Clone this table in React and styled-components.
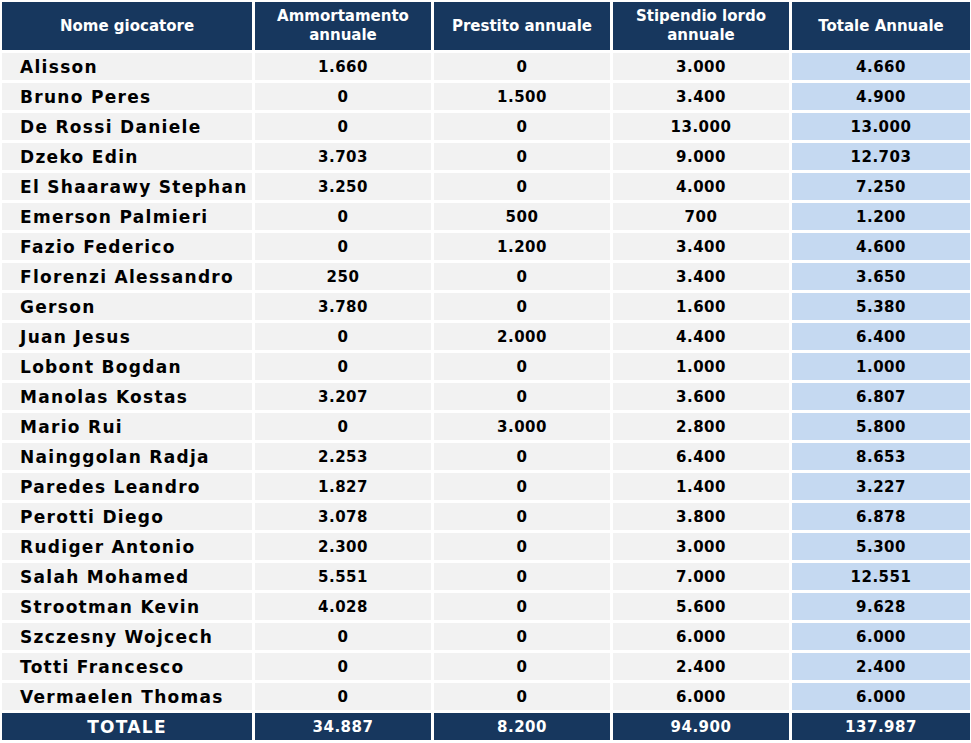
import React from 'react';
import styled, { createGlobalStyle } from 'styled-components';

const GlobalStyle = createGlobalStyle`
  html, body { margin: 0; padding: 0; background: #ffffff; }
  body { font-family: "DejaVu Sans", Verdana, sans-serif; }
`;

const players = [
  ['Alisson', '1.660', '0', '3.000', '4.660'],
  ['Bruno Peres', '0', '1.500', '3.400', '4.900'],
  ['De Rossi Daniele', '0', '0', '13.000', '13.000'],
  ['Dzeko Edin', '3.703', '0', '9.000', '12.703'],
  ['El Shaarawy Stephan', '3.250', '0', '4.000', '7.250'],
  ['Emerson Palmieri', '0', '500', '700', '1.200'],
  ['Fazio Federico', '0', '1.200', '3.400', '4.600'],
  ['Florenzi Alessandro', '250', '0', '3.400', '3.650'],
  ['Gerson', '3.780', '0', '1.600', '5.380'],
  ['Juan Jesus', '0', '2.000', '4.400', '6.400'],
  ['Lobont Bogdan', '0', '0', '1.000', '1.000'],
  ['Manolas Kostas', '3.207', '0', '3.600', '6.807'],
  ['Mario Rui', '0', '3.000', '2.800', '5.800'],
  ['Nainggolan Radja', '2.253', '0', '6.400', '8.653'],
  ['Paredes Leandro', '1.827', '0', '1.400', '3.227'],
  ['Perotti Diego', '3.078', '0', '3.800', '6.878'],
  ['Rudiger Antonio', '2.300', '0', '3.000', '5.300'],
  ['Salah Mohamed', '5.551', '0', '7.000', '12.551'],
  ['Strootman Kevin', '4.028', '0', '5.600', '9.628'],
  ['Szczesny Wojcech', '0', '0', '6.000', '6.000'],
  ['Totti Francesco', '0', '0', '2.400', '2.400'],
  ['Vermaelen Thomas', '0', '0', '6.000', '6.000'],
];

const headers = [
  'Nome giocatore',
  'Ammortamento annuale',
  'Prestito annuale',
  'Stipendio lordo annuale',
  'Totale Annuale',
];

const totals = ['TOTALE', '34.887', '8.200', '94.900', '137.987'];

const Sheet = styled.div`
  display: grid;
  grid-template-columns: 250px 176px 176px 176px 178px;
  grid-template-rows: 48px;
  grid-auto-rows: 27px;
  gap: 3px;
  padding: 2px;
  width: max-content;
`;

const HeadCell = styled.div`
  background: #17375e;
  color: #ffffff;
  font-size: 15px;
  font-weight: bold;
  line-height: 19px;
  display: flex;
  align-items: center;
  justify-content: center;
  text-align: center;
  padding: 0 10px;
`;

const Cell = styled.div`
  background: ${({ $total }) => ($total ? '#c5d9f1' : '#f2f2f2')};
  color: #000000;
  font-weight: bold;
  font-size: ${({ $name }) => ($name ? '17px' : '15px')};
  letter-spacing: ${({ $name }) => ($name ? '1.3px' : '0.5px')};
  display: flex;
  align-items: center;
  justify-content: ${({ $name }) => ($name ? 'flex-start' : 'center')};
  padding-left: ${({ $name }) => ($name ? '18px' : '0')};
  white-space: nowrap;
`;

const FootCell = styled.div`
  background: #17375e;
  color: #ffffff;
  font-weight: bold;
  font-size: ${({ $label }) => ($label ? '17px' : '15px')};
  letter-spacing: ${({ $label }) => ($label ? '1.3px' : '0.5px')};
  display: flex;
  align-items: center;
  justify-content: center;
`;

export default function App() {
  return (
    <>
      <GlobalStyle />
      <Sheet>
        {headers.map((h) => (
          <HeadCell key={h}>{h}</HeadCell>
        ))}
        {players.map((row) =>
          row.map((v, i) => (
            <Cell key={row[0] + i} $name={i === 0} $total={i === 4}>
              {v}
            </Cell>
          ))
        )}
        {totals.map((v, i) => (
          <FootCell key={'t' + i} $label={i === 0}>
            {v}
          </FootCell>
        ))}
      </Sheet>
    </>
  );
}
